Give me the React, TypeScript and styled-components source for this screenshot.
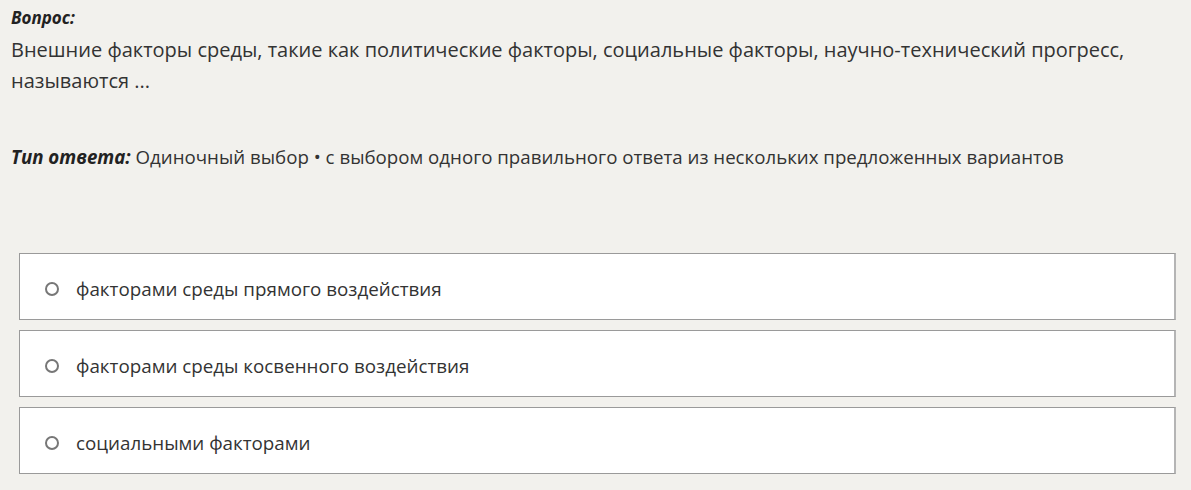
import React from "react";
import styled, { createGlobalStyle } from "styled-components";

const GlobalStyle = createGlobalStyle`
  html, body {
    margin: 0;
    padding: 0;
    background: #f2f1ed;
  }
  body {
    font-family: "Open Sans", "Noto Sans", sans-serif;
    color: #333333;
  }
`;

const Page = styled.div`
  width: 1191px;
  height: 490px;
  box-sizing: border-box;
  padding: 5px 15px 0 11px;
  overflow: hidden;
`;

const Label = styled.div`
  font-size: 17px;
  font-weight: 700;
  font-style: italic;
  color: #222222;
  line-height: 26px;
`;

const QuestionText = styled.div`
  margin-top: 3px;
  font-size: 20px;
  line-height: 31px;
  color: #333333;
`;

const AnswerType = styled.div`
  margin-top: 48px;
  font-size: 18.7px;
  line-height: 26px;
  color: #333333;

  b {
    font-style: italic;
    font-weight: 700;
    color: #222222;
  }
`;

const Options = styled.div`
  display: flex;
  flex-direction: column;
  gap: 10px;
  margin-top: 83px;
  margin-left: 8px;
`;

const Option = styled.label`
  display: flex;
  align-items: center;
  gap: 17px;
  height: 67px;
  box-sizing: border-box;
  padding: 4px 0 0 25px;
  background: #ffffff;
  border: 1px solid #9a9a9a;
  border-right: 2px solid #b5b5b5;
  font-size: 18.8px;
  color: #333333;
  cursor: pointer;
`;

const Radio = styled.span`
  display: block;
  width: 14px;
  height: 14px;
  box-sizing: border-box;
  border: 2px solid #777777;
  border-radius: 50%;
  flex-shrink: 0;
`;

const options = [
  "факторами среды прямого воздействия",
  "факторами среды косвенного воздействия",
  "социальными факторами",
];

export default function App() {
  return (
    <>
      <GlobalStyle />
      <Page>
        <Label>Вопрос:</Label>
        <QuestionText>
          Внешние факторы среды, такие как политические факторы, социальные факторы, научно-технический прогресс,
          называются ...
        </QuestionText>
        <AnswerType>
          <b>Тип ответа:</b> Одиночный выбор • с выбором одного правильного ответа из нескольких предложенных вариантов
        </AnswerType>
        <Options>
          {options.map((o) => (
            <Option key={o}>
              <Radio />
              {o}
            </Option>
          ))}
        </Options>
      </Page>
    </>
  );
}
